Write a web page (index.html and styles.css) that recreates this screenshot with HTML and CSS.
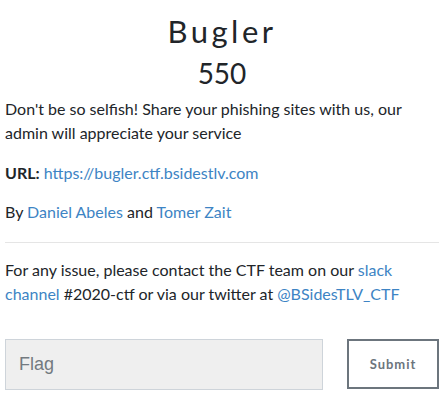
FILE: index.html
```html
<!DOCTYPE html>
<html>
<head>
<meta charset="utf-8">
<link rel="stylesheet" href="styles.css">
</head>
<body>
<div class="modal">
  <h2 class="name">Bugler</h2>
  <h3 class="value">550</h3>
  <div class="desc">
    <p class="lead">Don't be so selfish! Share your phishing sites with us, our admin will appreciate your service</p>
    <p><strong>URL:</strong> <a href="#">https://bugler.ctf.bsidestlv.com</a></p>
    <p class="by">By <a href="#">Daniel Abeles</a> and <a href="#">Tomer Zait</a></p>
    <hr>
    <p>For any issue, please contact the CTF team on our <a href="#">slack channel</a> #2020-ctf or via our twitter at <a href="#">@BSidesTLV_CTF</a></p>
  </div>
  <div class="submit-row">
    <input class="flag" type="text" placeholder="Flag">
    <button class="btn">Submit</button>
  </div>
</div>
</body>
</html>
```
FILE: styles.css
```css
html, body {
  margin: 0;
  padding: 0;
  background: #fff;
}
body {
  font-family: "Lato", "Liberation Sans", sans-serif;
  font-size: 16px;
  line-height: 1.5;
  color: #212529;
}
.modal {
  padding: 0 6px 0 5px;
}
.name {
  margin: 0;
  padding-top: 13px;
  text-align: center;
  font-family: "Lato", sans-serif;
  font-weight: 400;
  font-size: 31px;
  letter-spacing: 3.5px;
  line-height: 1.2;
  color: #212529;
}
.value {
  margin: 7px 0 6px;
  text-align: center;
  font-family: "Lato", sans-serif;
  font-weight: 400;
  font-size: 28px;
  line-height: 1.2;
  color: #212529;
}
.desc p {
  margin: 0 0 15px;
}
.desc p.lead {
  margin-bottom: 16px;
}
.desc p.by {
  margin-bottom: 18px;
}
.desc a {
  color: #3d84c4;
  text-decoration: none;
}
.desc strong {
  font-weight: 700;
}
hr {
  border: 0;
  border-top: 1px solid #e5e5e5;
  margin: 13px 0 15px;
}
.submit-row {
  display: flex;
  gap: 24px;
  margin-top: 33px;
}
.flag {
  flex: 1;
  min-width: 0;
  height: 51px;
  box-sizing: border-box;
  border: 1px solid #ced4da;
  background: #efefef;
  padding: 0 13px;
  font-family: "Liberation Sans", Arial, sans-serif;
  font-size: 18px;
  color: #495057;
  border-radius: 0;
}
.flag::placeholder {
  color: #737a80;
}
.btn {
  width: 92px;
  height: 50px;
  box-sizing: border-box;
  border: 2px solid #6c757d;
  background: #fff;
  font-family: "Lato", sans-serif;
  font-weight: 700;
  font-size: 13px;
  letter-spacing: 1px;
  color: #6c757d;
  border-radius: 0;
  padding: 0;
}
```
